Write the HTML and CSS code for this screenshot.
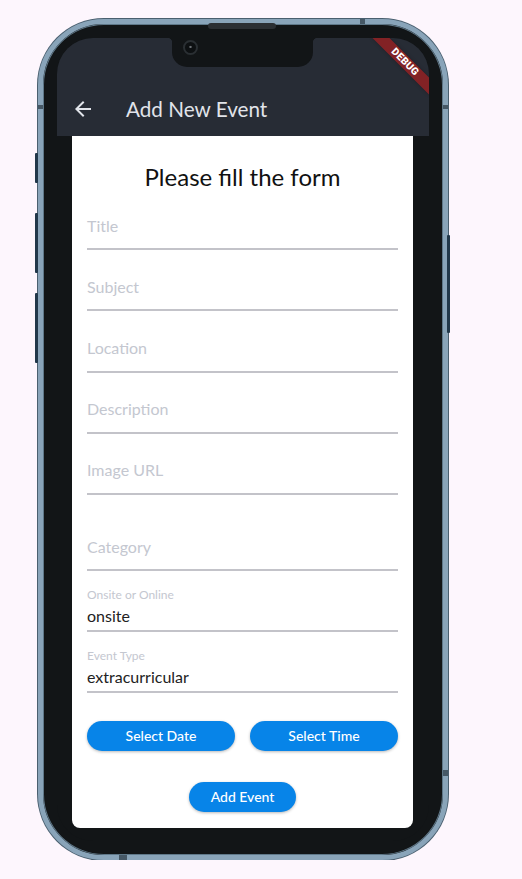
FILE: index.html
```html
<!DOCTYPE html>
<html lang="en">
<head>
<meta charset="utf-8">
<title>Add New Event</title>
<link rel="stylesheet" href="styles.css">
</head>
<body>
<div class="phone">
  <span class="side-btn side-l1"></span>
  <span class="side-btn side-l2"></span>
  <span class="side-btn side-l3"></span>
  <span class="side-btn side-r1"></span>
  <span class="band band-top"></span>
  <span class="band band-l"></span>
  <span class="band band-r"></span>
  <span class="band band-r2"></span>
  <span class="band band-bottom"></span>
  <span class="speaker"></span>
  <div class="screen">
    <div class="notch"><span class="camera"></span></div>
    <div class="debug-banner">DEBUG</div>
    <header class="appbar">
      <div class="toolbar">
        <svg class="back" viewBox="0 0 24 24" width="24" height="24"><path d="M20 11H7.830l5.590-5.590L12 4l-8 8 8 8 1.410-1.410L7.830 13H20v-2z" fill="currentColor"/></svg>
        <h1 class="title">Add New Event</h1>
      </div>
    </header>
    <main class="card">
      <h2 class="heading">Please fill the form</h2>
      <div class="field"><span class="hint">Title</span></div>
      <div class="field"><span class="hint">Subject</span></div>
      <div class="field"><span class="hint">Location</span></div>
      <div class="field"><span class="hint">Description</span></div>
      <div class="field"><span class="hint">Image URL</span></div>
      <div class="field field-gap"><span class="hint">Category</span></div>
      <div class="field field-filled"><span class="label">Onsite or Online</span><span class="value">onsite</span></div>
      <div class="field field-filled"><span class="label">Event Type</span><span class="value">extracurricular</span></div>
      <div class="btn-row">
        <button class="btn">Select Date</button>
        <button class="btn">Select Time</button>
      </div>
      <div class="submit-row"><button class="btn btn-submit">Add Event</button></div>
    </main>
  </div>
</div>
</body>
</html>
```

FILE: styles.css
```css
html, body {
  margin: 0;
  padding: 0;
  background: #fdf6fd;
  overflow: hidden;
}

body {
  font-family: Lato, "Noto Sans", sans-serif;
}

.phone {
  position: relative;
  box-sizing: border-box;
  width: 410px;
  height: 841px;
  margin: 19px 0 0 38px;
  padding: 14px;
  border: 5px solid #89a4b9;
  border-radius: 66px;
  background: #121517;
  box-shadow: 0 0 0 1px #4a5f6f, inset 0 0 0 1px #5f7889;
}

.side-btn {
  position: absolute;
  width: 3px;
  background: #22384a;
  border-radius: 1px;
}
.side-l1 { left: -8px; top: 129px; height: 30px; }
.side-l2 { left: -8px; top: 189px; height: 60px; }
.side-l3 { left: -8px; top: 269px; height: 70px; }
.side-r1 { left: 404px; top: 211px; height: 98px; }

.band {
  position: absolute;
  background: #465866;
}
.band-top { left: 317px; top: -5px; width: 5px; height: 5px; }
.band-l { left: -5px; top: 81px; width: 5px; height: 4px; }
.band-r { left: 400px; top: 81px; width: 5px; height: 4px; }
.band-r2 { left: 400px; top: 746px; width: 5px; height: 6px; }
.band-bottom { left: 76px; top: 831px; width: 8px; height: 5px; }

.speaker {
  position: absolute;
  left: 165px;
  top: -1px;
  width: 68px;
  height: 6px;
  border-radius: 3px;
  background: #2b2f33;
}

.screen {
  position: relative;
  height: 803px;
  border-radius: 36px;
  overflow: hidden;
  background: #121517;
}

.notch {
  position: absolute;
  left: 115px;
  top: 0;
  width: 141px;
  height: 29px;
  background: #121517;
  border-radius: 0 0 15px 15px;
  z-index: 2;
}
.notch::before,
.notch::after {
  content: "";
  position: absolute;
  top: 0;
  width: 5px;
  height: 5px;
}
.notch::before {
  left: -5px;
  background: radial-gradient(circle at 0 100%, transparent 5px, #121517 5.5px);
}
.notch::after {
  right: -5px;
  background: radial-gradient(circle at 100% 100%, transparent 5px, #121517 5.5px);
}
.camera {
  position: absolute;
  left: 11px;
  top: 2px;
  box-sizing: border-box;
  width: 15px;
  height: 15px;
  border-radius: 50%;
  border: 2px solid #2a2f33;
  background: radial-gradient(circle at 50% 45%, #6b7075 0, #6b7075 0.8px, #0d1012 1.5px);
}

.debug-banner {
  position: absolute;
  top: 18px;
  right: -16px;
  width: 80px;
  height: 12px;
  transform: rotate(45deg);
  background: rgba(183, 28, 28, 0.63);
  color: #fff;
  font-family: Roboto, "Liberation Sans", sans-serif;
  font-size: 10.2px;
  font-weight: 900;
  line-height: 12px;
  text-align: center;
  letter-spacing: 0.3px;
  z-index: 3;
  box-shadow: 0 0 4px rgba(0, 0, 0, 0.25);
}

.appbar {
  height: 98px;
  background: #272c35;
  display: flex;
  align-items: flex-end;
}

.toolbar {
  height: 54px;
  display: flex;
  align-items: center;
  padding-left: 14px;
  gap: 31px;
  color: #e1e4ea;
}

.back {
  display: block;
  width: 24px;
  height: 24px;
}

.title {
  margin: 0;
  font-size: 20.7px;
  font-weight: 400;
  line-height: 24px;
  color: #e1e4ea;
}

.card {
  display: block;
  margin: 0 16px 0 15px;
  padding: 0 15px 16px;
  background: #fff;
  border-radius: 0 0 8px 8px;
}

.heading {
  margin: 0 0 -2px;
  padding-top: 27px;
  font-size: 24px;
  font-weight: 400;
  line-height: 28px;
  text-align: center;
  color: #111;
}

.field {
  padding: 26.7px 0 12.5px;
  border-bottom: 2px solid #c3c3c9;
  line-height: 20px;
  font-size: 16px;
}
.field-gap {
  padding-top: 41.7px;
}
.field-filled {
  display: flex;
  flex-direction: column;
  padding: 17px 0 4px;
}

.hint {
  display: block;
  color: #c4c7d0;
}

.label {
  display: block;
  font-size: 12px;
  line-height: 14px;
  color: #c4c7d0;
  margin-bottom: 4px;
}

.value {
  display: block;
  font-size: 16px;
  line-height: 20px;
  color: #222;
}

.btn-row {
  display: grid;
  grid-template-columns: 1fr 1fr;
  gap: 15px;
  margin-top: 28px;
}

.btn {
  height: 30px;
  border: none;
  border-radius: 15px;
  background: #0784e8;
  color: #fff;
  font-family: Lato, "Noto Sans", sans-serif;
  font-size: 14px;
  font-weight: 500;
  line-height: 30px;
  padding: 0;
  box-shadow: 0 1px 3px rgba(0, 0, 0, 0.28);
}

.submit-row {
  display: flex;
  justify-content: center;
  margin-top: 31px;
}

.btn-submit {
  width: 107px;
}
```
